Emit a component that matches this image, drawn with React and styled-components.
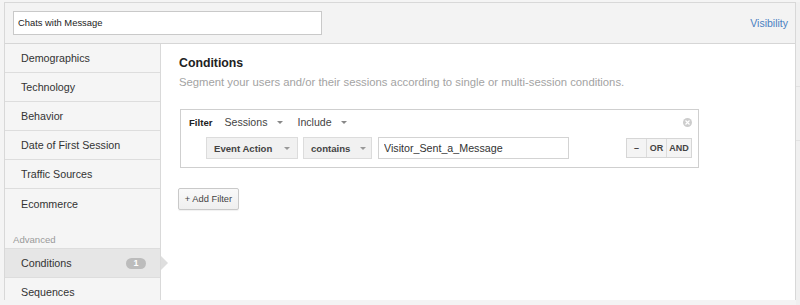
import React from "react";
import styled, { createGlobalStyle } from "styled-components";

const GlobalStyle = createGlobalStyle`
  html, body {
    margin: 0;
    padding: 0;
    background: #f4f4f4;
    font-family: "Liberation Sans", Arial, sans-serif;
  }
  body {
    width: 800px;
    height: 305px;
    overflow: hidden;
  }
  * { box-sizing: border-box; }
`;

const Page = styled.div`
  display: flex;
  padding: 2px 0 0 4px;
  height: 305px;
`;

const Panel = styled.div`
  width: 792px;
  border: 1px solid #d8d8d8;
  border-bottom: none;
  display: flex;
  flex-direction: column;
  align-self: flex-start;
`;

const Header = styled.div`
  height: 41px;
  background: #f3f3f3;
  border-bottom: 1px solid #d6d6d6;
  display: flex;
  align-items: center;
  justify-content: space-between;
  padding: 0 7px 0 8px;
`;

const NameInput = styled.input`
  width: 309px;
  height: 24px;
  border: 1px solid #c9c9c9;
  background: #fff;
  padding: 0 0 0 4px;
  font-family: "Liberation Sans", Arial, sans-serif;
  font-size: 9.4px;
  color: #222;
  outline: none;
  margin-top: -1px;
`;

const Link = styled.a`
  font-size: 10.5px;
  color: #4a7fc1;
  text-decoration: none;
  margin-top: -1px;
`;

const Body = styled.div`
  display: flex;
  height: 256px;
`;

const Sidebar = styled.div`
  width: 156px;
  background: #f5f5f5;
  border-right: 1px solid #d9d9d9;
  display: flex;
  flex-direction: column;
`;

const NavItem = styled.div`
  position: relative;
  height: ${(p) => (p.$top ? 30 : 29)}px;
  flex-shrink: 0;
  display: flex;
  align-items: center;
  justify-content: space-between;
  padding: 0 14px 0 16px;
  font-size: 10.7px;
  color: #333;
  background: ${(p) => (p.$active ? "#e6e6e6" : "transparent")};
  border-bottom: ${(p) => (p.$last ? "none" : "1px solid #dddddd")};
  border-top: ${(p) => (p.$top ? "1px solid #dddddd" : "none")};
`;

const SectionLabel = styled.div`
  padding: 15px 0 0 8px;
  height: 30px;
  line-height: 14px;
  font-size: 9.6px;
  color: #9a9a9a;
  flex-shrink: 0;
`;

const Badge = styled.span`
  width: 20px;
  height: 11px;
  border-radius: 6px;
  background: #bcbcbc;
  color: #fff;
  font-weight: bold;
  font-size: 9px;
  display: flex;
  align-items: center;
  justify-content: center;
`;

const Pointer = styled.span`
  position: absolute;
  left: calc(100% + 1px);
  top: 50%;
  transform: translateY(-50%);
  width: 0;
  height: 0;
  border-top: 7px solid transparent;
  border-bottom: 7px solid transparent;
  border-left: 7px solid #dedede;
  z-index: 2;
`;

const Main = styled.div`
  flex: 1;
  background: #fff;
  padding: 11px 0 0 18px;
`;

const Title = styled.div`
  font-weight: bold;
  font-size: 12.3px;
  line-height: 16px;
  color: #222;
`;

const Subtitle = styled.div`
  margin-top: 3px;
  font-size: 11.3px;
  line-height: 16px;
  color: #a3a3a3;
`;

const FilterBox = styled.div`
  margin: 19px 0 0 1px;
  width: 519px;
  border: 1px solid #cfcfcf;
  padding: 5px 6px 8px 8px;
`;

const FilterHead = styled.div`
  display: flex;
  align-items: center;
  height: 14px;
`;

const FilterLabel = styled.span`
  font-weight: bold;
  font-size: 9.6px;
  color: #222;
  margin-right: 12px;
`;

const Dropdown = styled.span`
  display: flex;
  align-items: center;
  font-size: 10.6px;
  color: #444;
  margin-right: 14px;
`;

const Caret = styled.span`
  display: inline-block;
  width: 0;
  height: 0;
  border-left: 3px solid transparent;
  border-right: 3px solid transparent;
  border-top: 3px solid ${(p) => p.$color || "#888"};
  margin-left: ${(p) => p.$gap || 10}px;
`;

const CloseButton = styled.span`
  margin-left: auto;
  width: 9px;
  height: 9px;
  border-radius: 50%;
  background: #cdcdcd;
  display: flex;
  align-items: center;
  justify-content: center;
`;

const ConditionRow = styled.div`
  margin-top: 8px;
  display: flex;
  align-items: center;
  padding-left: 17px;
`;

const SelectButton = styled.span`
  width: ${(p) => p.$w}px;
  height: 22px;
  margin-left: ${(p) => p.$ml || 0}px;
  background: #f1f1f1;
  border: 1px solid #dcdcdc;
  display: flex;
  align-items: center;
  justify-content: space-between;
  padding: 0 7px 0 7px;
  font-weight: bold;
  font-size: 9.6px;
  color: #444;
`;

const ValueInput = styled.input`
  margin-left: 6px;
  width: 191px;
  height: 22px;
  border: 1px solid #d3d3d3;
  padding: 0 0 0 5px;
  font-family: "Liberation Sans", Arial, sans-serif;
  font-size: 10.7px;
  color: #333;
  outline: none;
`;

const Group = styled.div`
  margin-left: auto;
  display: flex;
  height: 20px;
  border: 1px solid #d6d6d6;
  background: #f4f4f4;
`;

const GroupButton = styled.span`
  width: ${(p) => p.$w}px;
  display: flex;
  align-items: center;
  justify-content: center;
  font-weight: bold;
  font-size: 9px;
  color: #444;
  border-left: ${(p) => (p.$first ? "none" : "1px solid #dcdcdc")};
`;

const AddButton = styled.button`
  margin: 20px 0 0 -1px;
  width: 61px;
  height: 22px;
  border: 1px solid #c9c9c9;
  border-radius: 2px;
  background: linear-gradient(#f9f9f9, #efefef);
  box-shadow: 0 1px 1px rgba(0, 0, 0, 0.06);
  font-family: "Liberation Sans", Arial, sans-serif;
  font-size: 9.3px;
  color: #444;
  padding: 0;
`;

const RightStrip = styled.div`
  flex: 1;
  display: flex;
  flex-direction: column;
  background: #f0f0f0;
`;

const StripCell = styled.div`
  height: ${(p) => p.$h}px;
  border-bottom: 1px solid #e2e2e2;
`;

const navItems = [
  "Demographics",
  "Technology",
  "Behavior",
  "Date of First Session",
  "Traffic Sources",
  "Ecommerce",
];

export default function App() {
  return (
    <>
      <GlobalStyle />
      <Page>
        <Panel>
          <Header>
            <NameInput defaultValue="Chats with Message" readOnly />
            <Link href="#">Visibility</Link>
          </Header>
          <Body>
            <Sidebar>
              {navItems.map((label, i) => (
                <NavItem key={label} $last={i === navItems.length - 1}>
                  {label}
                </NavItem>
              ))}
              <SectionLabel>Advanced</SectionLabel>
              <NavItem $active $top>
                Conditions
                <Badge>1</Badge>
                <Pointer />
              </NavItem>
              <NavItem>Sequences</NavItem>
            </Sidebar>
            <Main>
              <Title>Conditions</Title>
              <Subtitle>
                Segment your users and/or their sessions according to single or
                multi-session conditions.
              </Subtitle>
              <FilterBox>
                <FilterHead>
                  <FilterLabel>Filter</FilterLabel>
                  <Dropdown>
                    Sessions
                    <Caret $gap={10} />
                  </Dropdown>
                  <Dropdown>
                    Include
                    <Caret $gap={9} />
                  </Dropdown>
                  <CloseButton>
                    <svg width="5" height="5" viewBox="0 0 5 5">
                      <path d="M0.5 0.5L4.5 4.5M4.5 0.5L0.5 4.5" stroke="#fff" strokeWidth="1.2" />
                    </svg>
                  </CloseButton>
                </FilterHead>
                <ConditionRow>
                  <SelectButton $w={92}>
                    Event Action
                    <Caret $gap={0} $color="#999" />
                  </SelectButton>
                  <SelectButton $w={69} $ml={5}>
                    contains
                    <Caret $gap={0} $color="#999" />
                  </SelectButton>
                  <ValueInput defaultValue="Visitor_Sent_a_Message" readOnly />
                  <Group>
                    <GroupButton $w={19} $first>–</GroupButton>
                    <GroupButton $w={20}>OR</GroupButton>
                    <GroupButton $w={25}>AND</GroupButton>
                  </Group>
                </ConditionRow>
              </FilterBox>
              <AddButton>+ Add Filter</AddButton>
            </Main>
          </Body>
        </Panel>
        <RightStrip>
          <StripCell $h={85} />
          <StripCell $h={54} />
        </RightStrip>
      </Page>
    </>
  );
}
